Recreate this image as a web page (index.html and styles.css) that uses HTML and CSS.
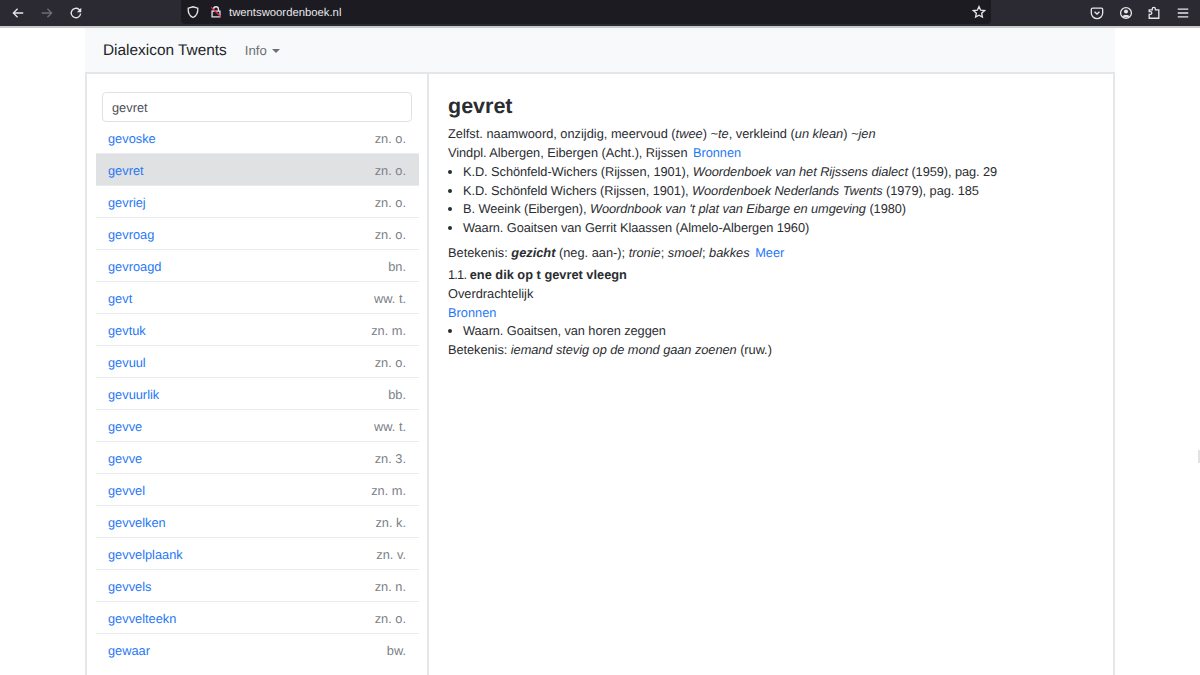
FILE: index.html
```html
<!DOCTYPE html>
<html lang="nl">
<head>
<meta charset="utf-8">
<title>Dialexicon Twents</title>
<link rel="stylesheet" href="styles.css">
</head>
<body>
<header class="chrome">
  <div class="chrome-nav">
    <svg class="ic" viewBox="0 0 16 16"><path d="M14 8H3M7.500 3.200 2.700 8l4.800 4.800"/></svg>
    <svg class="ic dim" viewBox="0 0 16 16"><path d="M2 8h11M8.500 3.200 13.300 8l-4.800 4.800"/></svg>
    <svg class="ic" viewBox="0 0 16 16"><path d="M13.300 8.600A5.400 5.400 0 1 1 11.600 4L13.400 5.800"/><path class="solid" d="M14 2v5H9z"/></svg>
  </div>
  <div class="urlbar">
    <svg class="ic shield" viewBox="0 0 16 16"><path d="M8 2 13.500 3.700C13.800 9 12 12.500 8 14.300 4 12.500 2.200 9 2.500 3.700z"/></svg>
    <svg class="ic lock" viewBox="0 0 16 16"><path d="M5.200 7V4.800a2.800 2.800 0 0 1 5.600 0V7M3.500 7h9v6.500h-9z"/><path class="slash" d="M2.500 2.500 13.500 13.500"/></svg>
    <span class="url">twentswoordenboek.nl</span>
    <svg class="ic star" viewBox="0 0 16 16"><path d="M8 1.800 9.900 5.900 14.300 6.400 11 9.400 11.900 13.800 8 11.600 4.100 13.800 5 9.400 1.700 6.400 6.100 5.900z"/></svg>
  </div>
  <div class="chrome-tools">
    <svg class="ic" viewBox="0 0 16 16"><path d="M3 2.500h10A1.500 1.500 0 0 1 14.500 4v4a6.500 6.500 0 0 1-13 0V4A1.500 1.500 0 0 1 3 2.500z"/><path d="M5.200 6.500 8 9.200l2.800-2.700"/></svg>
    <svg class="ic" viewBox="0 0 16 16"><circle cx="8" cy="8" r="6.200"/><circle class="solid" cx="8" cy="6.400" r="2.300"/><path class="solid" d="M3.900 11.800C5 9.800 11 9.800 12.100 11.800 10 13.600 6 13.600 3.900 11.800z"/></svg>
    <svg class="ic" viewBox="0 0 16 16"><path d="M2.500 14V9.500H4a1.500 1.500 0 0 0 0-3H2.500V4.500H6V3.300a1.800 1.800 0 0 1 3.600 0V4.500h3.900V14z"/></svg>
    <svg class="ic" viewBox="0 0 16 16"><path d="M2 3.500h12M2 8h12M2 12.500h12"/></svg>
  </div>
</header>

<div class="page">
  <nav class="navbar">
    <a class="brand">Dialexicon Twents</a>
    <a class="nav-info">Info<span class="caret"></span></a>
  </nav>
  <main class="panels">
    <aside class="side">
      <div class="search"><span class="search-value">gevret</span></div>
      <ul class="list">
        <li class="row"><a>gevoske</a><span>zn. o.</span></li>
        <li class="row active"><a>gevret</a><span>zn. o.</span></li>
        <li class="row"><a>gevriej</a><span>zn. o.</span></li>
        <li class="row"><a>gevroag</a><span>zn. o.</span></li>
        <li class="row"><a>gevroagd</a><span>bn.</span></li>
        <li class="row"><a>gevt</a><span>ww. t.</span></li>
        <li class="row"><a>gevtuk</a><span>zn. m.</span></li>
        <li class="row"><a>gevuul</a><span>zn. o.</span></li>
        <li class="row"><a>gevuurlik</a><span>bb.</span></li>
        <li class="row"><a>gevve</a><span>ww. t.</span></li>
        <li class="row"><a>gevve</a><span>zn. 3.</span></li>
        <li class="row"><a>gevvel</a><span>zn. m.</span></li>
        <li class="row"><a>gevvelken</a><span>zn. k.</span></li>
        <li class="row"><a>gevvelplaank</a><span>zn. v.</span></li>
        <li class="row"><a>gevvels</a><span>zn. n.</span></li>
        <li class="row"><a>gevvelteekn</a><span>zn. o.</span></li>
        <li class="row"><a>gewaar</a><span>bw.</span></li>
      </ul>
    </aside>
    <article class="entry">
      <h1>gevret</h1>
      <p class="line">Zelfst. naamwoord, onzijdig, meervoud (<i>twee</i>) <i>~te</i>, verkleind (<i>un klean</i>) <i>~jen</i></p>
      <p class="line narrow">Vindpl. Albergen, Eibergen (Acht.), Rijssen <a class="more">Bronnen</a></p>
      <ul class="sources">
        <li>K.D. Schönfeld-Wichers (Rijssen, 1901), <i>Woordenboek van het Rijssens dialect</i> (1959), pag. 29</li>
        <li>K.D. Schönfeld Wichers (Rijssen, 1901), <i>Woordenboek Nederlands Twents</i> (1979), pag. 185</li>
        <li>B. Weeink (Eibergen), <i>Woordnbook van 't plat van Eibarge en umgeving</i> (1980)</li>
        <li>Waarn. Goaitsen van Gerrit Klaassen (Almelo-Albergen 1960)</li>
      </ul>
      <p class="line meaning">Betekenis: <b><i>gezicht</i></b> (neg. aan-); <i>tronie</i>; <i>smoel</i>; <i>bakkes</i> <a class="more">Meer</a></p>
      <p class="line sub"><span class="num">1.1.</span> <b>ene dik op t gevret vleegn</b></p>
      <p class="line">Overdrachtelijk</p>
      <p class="line"><a class="link">Bronnen</a></p>
      <ul class="sources tight">
        <li>Waarn. Goaitsen, van horen zeggen</li>
      </ul>
      <p class="line narrow">Betekenis: <i>iemand stevig op de mond gaan zoenen</i> (ruw.)</p>
    </article>
  </main>
</div>
<div class="edge-tab"></div>
</body>
</html>
```

FILE: styles.css
```css
* { box-sizing: border-box; }
html, body { height: 100%; }
body {
  margin: 0;
  height: 675px;
  overflow: hidden;
  background: #fff;
  color: #2a2d31;
  font-family: "Liberation Sans", Arial, sans-serif;
  font-size: 12.800px;
  line-height: 18.750px;
  text-rendering: geometricPrecision;
}
a { text-decoration: none; }

.chrome {
  display: flex;
  align-items: center;
  height: 28px;
  background: #2b2a33;
  border-bottom: 2px solid #c9cacc;
}
.ic { width: 14px; height: 14px; flex: none; fill: none; stroke: #e6e6e9; stroke-width: 1.5; }
.ic .solid { fill: #e6e6e9; stroke: none; }
.ic.dim { stroke: #6f6e75; }
.chrome-nav { display: flex; align-items: center; gap: 15px; width: 181px; height: 26px; padding-left: 11px; }
.urlbar {
  display: flex;
  align-items: center;
  width: 810px;
  height: 24px;
  margin-bottom: 2px;
  padding: 0 5px;
  background: #1c1b22;
  border-radius: 0 0 4px 4px;
  color: #e8e8ea;
  font-size: 11.300px;
}
.shield { margin-left: 0; }
.lock { margin-left: 9px; }
.lock .slash { stroke: #e22850; }
.url { margin-left: 6px; padding-top: 2px; }
.star { margin-left: auto; }
.chrome-tools { display: flex; align-items: center; gap: 14.500px; padding-left: 99px; height: 26px; }

.page { margin: 0 85px; }
.navbar {
  display: flex;
  align-items: center;
  height: 44px;
  padding: 2px 0 0 18px;
  background: #f8f9fa;
}
.brand { color: #212529; font-size: 15.400px; }
.nav-info { display: flex; align-items: center; margin-left: 18px; color: #6c7075; font-size: 13.200px; }
.caret {
  margin-left: 5px;
  border-top: 4px solid #6c7075;
  border-left: 4px solid transparent;
  border-right: 4px solid transparent;
}

.panels {
  display: flex;
  height: 604px;
  border: 2px solid #e4e7ea;
  border-bottom: 0;
}
.side {
  flex: none;
  width: 342px;
  padding: 18px 9px 0;
  border-right: 2px solid #e4e7ea;
}
.search {
  display: flex;
  align-items: center;
  height: 30px;
  margin: 0 6px;
  padding: 2px 9px 0;
  border: 1px solid #dee2e6;
  border-radius: 4px;
  color: #495057;
}
.list { margin: 0 -1px 0 0; padding: 0; list-style: none; }
.row {
  display: flex;
  justify-content: space-between;
  align-items: center;
  height: 32px;
  padding: 3px 13px 0 12px;
  border-bottom: 1px solid #e9ecef;
}
.row:last-child { border-bottom: 0; padding-top: 2px; }
.row a { color: #1f78f6; }
.row span { color: #7a8087; }
.row.active { background: #e0e1e3; }

.entry { flex: 1; padding: 18px 19px 0; }
h1 { margin: 0 0 5.400px; font-size: 21.500px; line-height: 28px; font-weight: 700; }
.line { margin: 0; }
.narrow { letter-spacing: -0.050px; }
.more { margin-left: 2px; color: #1f78f6; }
.link { color: #1f78f6; }
.sources { margin: 0; padding: 0 0 0 15px; letter-spacing: -0.070px; }
.meaning { margin-top: 6px; }
.sub { margin-top: 3.400px; }
.num { letter-spacing: -0.800px; }
.edge-tab {
  position: absolute;
  left: 1198px;
  top: 450px;
  width: 2px;
  height: 13px;
  background: #e2e2e2;
}
```
